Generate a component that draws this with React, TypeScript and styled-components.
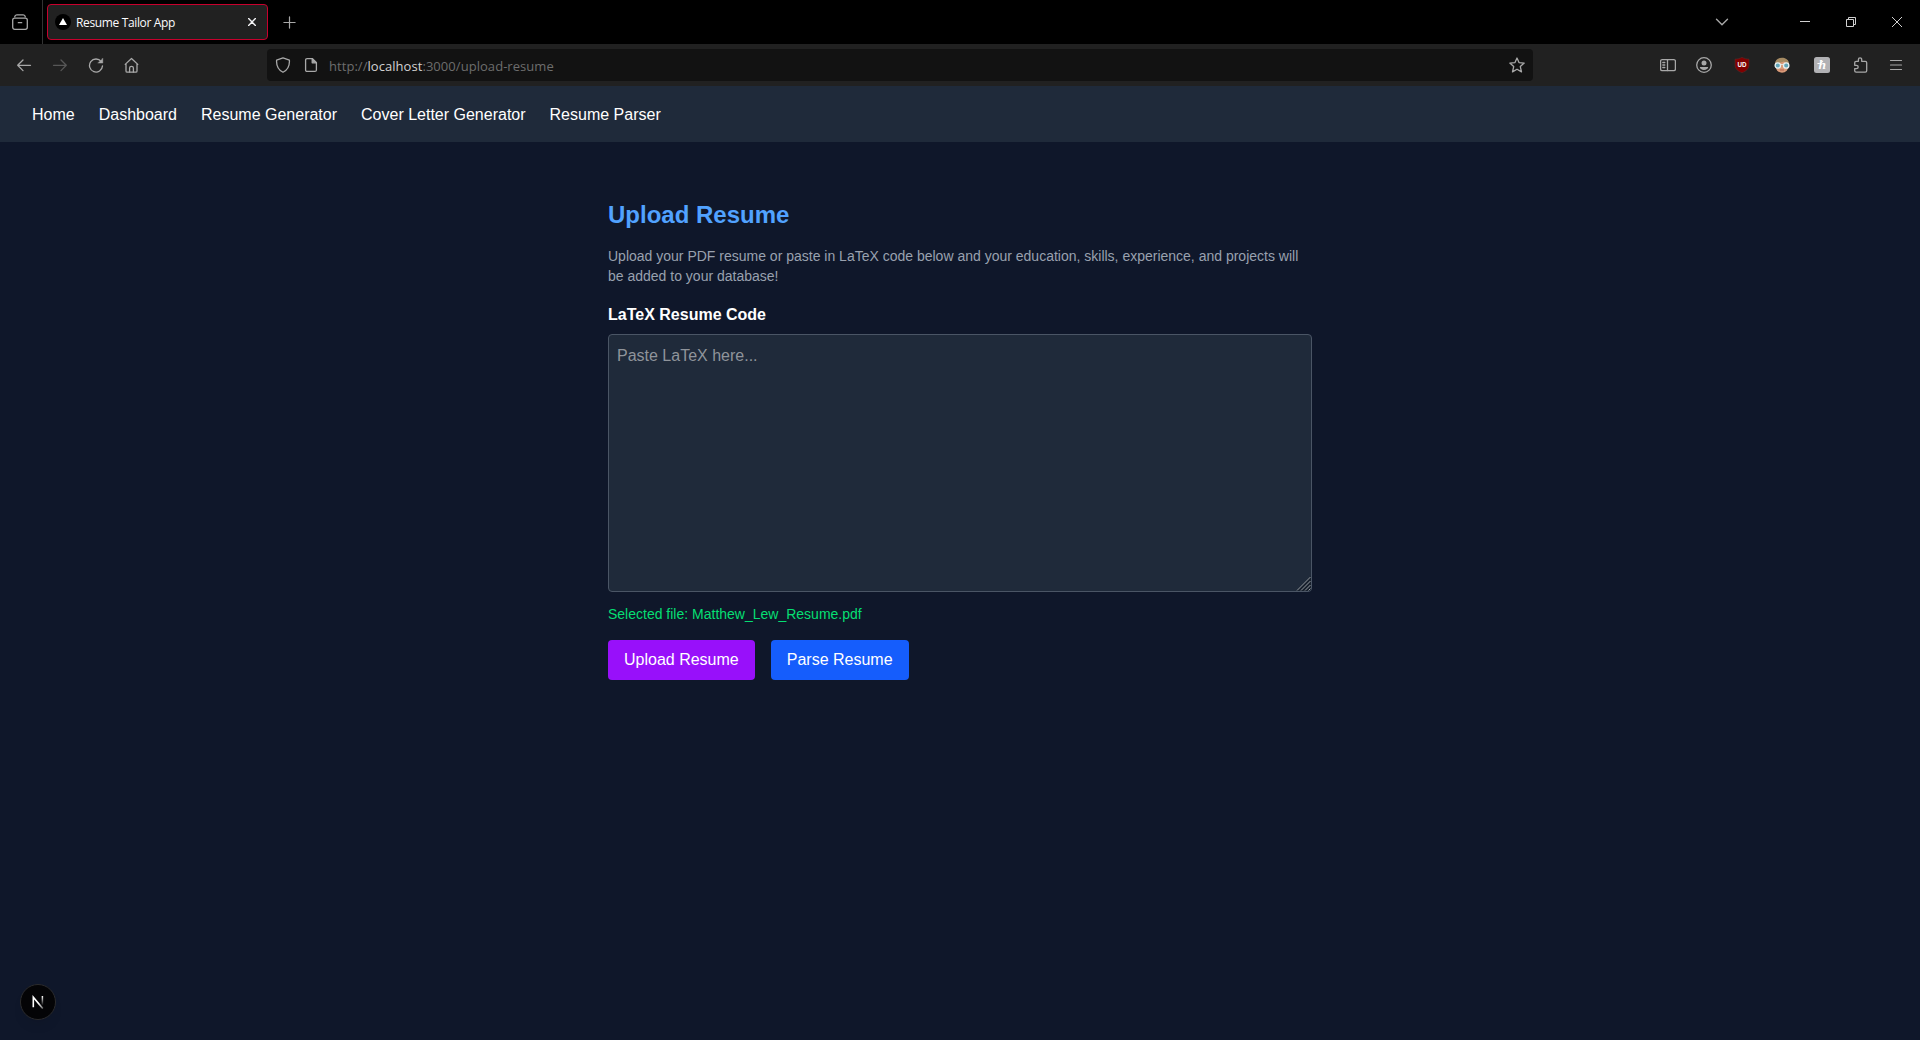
import React from 'react';
import styled, { createGlobalStyle } from 'styled-components';

const GlobalStyle = createGlobalStyle`
  *, *::before, *::after { box-sizing: border-box; }
  body {
    margin: 0;
    background: #0f172a;
    color: #ffffff;
    font-family: "Liberation Sans", Arial, sans-serif;
    font-size: 16px;
    line-height: 24px;
  }
  h1, p { margin: 0; }
`;

const Screen = styled.div`
  display: flex;
  flex-direction: column;
  width: 1920px;
  height: 1040px;
  overflow: hidden;
`;

const uiFont = `"Open Sans", "Noto Sans", sans-serif`;

const TabStrip = styled.header`
  display: flex;
  align-items: center;
  height: 44px;
  background: #000000;
  color: #a8a8a8;
`;

const FirefoxView = styled.div`
  display: flex;
  align-items: center;
  justify-content: center;
  width: 43px;
  height: 44px;
  padding-right: 2px;
  border-right: 1px solid #333333;
`;

const Tab = styled.div`
  display: flex;
  align-items: center;
  width: 221px;
  height: 36px;
  margin-left: 4px;
  padding: 0 11px 0 7px;
  background: #212121;
  border: 1px solid #c8002d;
  border-radius: 4px;
`;

const TabTitle = styled.span`
  flex: 1;
  margin-left: 5px;
  padding-top: 2px;
  color: #fbfbfe;
  font-family: ${uiFont};
  font-size: 12px;
  line-height: 16px;
  letter-spacing: -0.36px;
  white-space: nowrap;
`;

const NewTab = styled.div`
  display: flex;
  margin-left: 13px;
`;

const WindowControls = styled.div`
  display: flex;
  margin-left: auto;
`;

const Control = styled.div<{ $width: number }>`
  display: flex;
  align-items: center;
  justify-content: center;
  width: ${(p) => p.$width}px;
  height: 44px;
`;

const Toolbar = styled.div`
  display: flex;
  align-items: center;
  height: 42px;
  padding: 0 0 0 6px;
  background: #212121;
  color: #a8a8a8;
`;

const ToolButton = styled.div<{ $width?: number; $dim?: boolean }>`
  display: flex;
  flex: none;
  align-items: center;
  justify-content: center;
  width: ${(p) => p.$width ?? 36}px;
  height: 32px;
  color: ${(p) => (p.$dim ? '#575757' : 'inherit')};
`;

const AddressBar = styled.div`
  display: flex;
  flex: none;
  align-items: center;
  width: 1266px;
  height: 32px;
  margin: 0 117px;
  padding: 0 8px;
  border-radius: 4px;
  background: #121212;
`;

const Url = styled.span`
  flex: 1;
  margin-left: 10px;
  padding-top: 2px;
  color: #6d6d6d;
  font-family: ${uiFont};
  font-size: 13px;
  line-height: 20px;
  letter-spacing: 0.05px;
  white-space: nowrap;
`;

const Host = styled.span`
  color: #d2d2d2;
`;

const IconGap = styled.span`
  width: 12px;
`;

const Nav = styled.nav`
  display: flex;
  align-items: center;
  gap: 24px;
  height: 56px;
  padding: 2px 32px 0;
  background: #1f2a3a;
`;

const NavLink = styled.a`
  color: #ffffff;
  white-space: nowrap;
`;

const Main = styled.main`
  width: 768px;
  margin: 0 auto;
  padding: 57px 32px 0;
`;

const Title = styled.h1`
  margin-bottom: 15px;
  color: #51a2ff;
  font-size: 24px;
  font-weight: 700;
  line-height: 32px;
`;

const Intro = styled.p`
  margin-bottom: 17px;
  color: #99a1af;
  font-size: 14px;
  line-height: 20px;
`;

const Label = styled.label`
  display: block;
  margin-bottom: 7px;
  font-weight: 700;
`;

const Field = styled.div`
  position: relative;
  height: 258px;
`;

const CodeInput = styled.textarea`
  display: block;
  width: 100%;
  height: 258px;
  padding: 9px 8px 7px;
  background: #1f2a3a;
  border: 1px solid #4a5565;
  border-radius: 4px;
  color: #ffffff;
  font: inherit;
  resize: none;
  outline: none;
  &::placeholder { color: #8f949b; opacity: 1; }
`;

const Grip = styled.svg`
  position: absolute;
  right: 1px;
  bottom: 1px;
`;

const FileNote = styled.p`
  margin: 12px 0 16px;
  color: #05df72;
  font-size: 14px;
  line-height: 20px;
`;

const Actions = styled.div`
  display: flex;
  gap: 16px;
`;

const Button = styled.button<{ $color: string }>`
  padding: 8px 16px;
  border: 0;
  border-radius: 4px;
  background: ${(p) => p.$color};
  color: #ffffff;
  font: inherit;
`;

const DevBadge = styled.div`
  position: fixed;
  left: 20px;
  bottom: 20px;
  display: flex;
  align-items: center;
  justify-content: center;
  width: 36px;
  height: 36px;
  border: 1px solid #2b2b2d;
  border-radius: 50%;
  background: #040406;
  box-shadow: 0 8px 16px -8px rgba(0, 0, 0, 0.2);
`;

const Glyph = ({ children, size = 16, width = 1.3 }: { children: React.ReactNode; size?: number; width?: number }) => (
  <svg
    width={size}
    height={size}
    viewBox={`0 0 ${size} ${size}`}
    fill="none"
    stroke="currentColor"
    strokeWidth={width}
    strokeLinecap="round"
    strokeLinejoin="round"
  >
    {children}
  </svg>
);

const links = ['Home', 'Dashboard', 'Resume Generator', 'Cover Letter Generator', 'Resume Parser'];

export default function App() {
  return (
    <Screen>
      <GlobalStyle />
      <TabStrip>
        <FirefoxView>
          <Glyph>
            <rect x="0.7" y="4.2" width="14.6" height="11.1" rx="2" />
            <path d="M2.7 2.9C2.9 1.4 3.6.9 4.8.9h6.4c1.200 0 1.900.5 2.100 2M6.300 8.700h3.400" />
          </Glyph>
        </FirefoxView>
        <Tab>
          <svg width="16" height="16" viewBox="0 0 16 16">
            <circle cx="8" cy="8" r="8" fill="#000" />
            <path d="M8 4l4 7H4z" fill="#fff" />
          </svg>
          <TabTitle>Resume Tailor App</TabTitle>
          <svg width="8" height="8" viewBox="0 0 8 8" fill="none" stroke="#f4f4f6" strokeWidth="1.4" strokeLinecap="round">
            <path d="M.6.6l6.800 6.800M7.400.6L.6 7.400" />
          </svg>
        </Tab>
        <NewTab>
          <Glyph size={17} width={1.2}>
            <path d="M8.500 2.900v11.200M2.900 8.500h11.200" />
          </Glyph>
        </NewTab>
        <WindowControls>
          <Control $width={60}>
            <Glyph width={1.4}>
              <path d="M2.500 5.200L8 10.700l5.500-5.500" />
            </Glyph>
          </Control>
          <Control $width={30} />
          <Control $width={46}>
            <svg width="10" height="10" shapeRendering="crispEdges">
              <rect y="4" width="10" height="1" fill="#d0d0d0" />
            </svg>
          </Control>
          <Control $width={46}>
            <svg width="10" height="10" fill="none" stroke="#d0d0d0">
              <path d="M.5 2.500h7v7h-7zM2.500 2.500v-2h7v7h-2" />
            </svg>
          </Control>
          <Control $width={46}>
            <svg width="10" height="10" fill="none" stroke="#d0d0d0">
              <path d="M0 0l10 10M10 0L0 10" />
            </svg>
          </Control>
        </WindowControls>
      </TabStrip>

      <Toolbar>
        <ToolButton>
          <Glyph>
            <path d="M14.500 8.300H1.700M7 3L1.700 8.300 7 13.600" />
          </Glyph>
        </ToolButton>
        <ToolButton $dim>
          <Glyph>
            <path d="M1.500 8.300h12.800M9 3l5.300 5.300L9 13.600" />
          </Glyph>
        </ToolButton>
        <ToolButton>
          <Glyph>
            <path d="M13.200 4.600A6.500 6.500 0 1 0 14.500 8.900" />
            <path d="M14.800 1.400v4.700h-4.700z" fill="currentColor" strokeWidth=".4" />
          </Glyph>
        </ToolButton>
        <ToolButton>
          <Glyph>
            <path d="M1.200 7.400L7.500 1.500 13.800 7.400M2 6.800v7.100c0 .8.4 1.200 1.200 1.200h8.600c.8 0 1.200-.4 1.200-1.200V6.800" />
            <path d="M5.600 15v-4c0-1 .6-1.600 1.900-1.600s1.900.6 1.900 1.600v4" />
          </Glyph>
        </ToolButton>
        <AddressBar>
          <Glyph>
            <path d="M8 .9L14.400 3.200c.4 6-1.500 9.500-6.400 12.100C3.100 12.700 1.200 9.200 1.600 3.200z" />
          </Glyph>
          <IconGap />
          <Glyph>
            <path d="M4.100 1.600h5.300l4 4v7.300c0 1-.5 1.500-1.500 1.500H4.100c-1 0-1.500-.5-1.500-1.500V3.100c0-1 .5-1.500 1.500-1.500z" />
            <path d="M9.200 1.700v4.100h4.100z" fill="currentColor" />
          </Glyph>
          <Url>
            http://<Host>localhost</Host>:3000/upload-resume
          </Url>
          <Glyph>
            <path d="M8 1l2 4.600 5.200.5-3.900 3.500 1.200 5.300L8 12.200l-4.500 2.700 1.200-5.300L.8 6.100 6 5.600z" />
          </Glyph>
        </AddressBar>
        <ToolButton>
          <Glyph>
            <rect x=".6" y="2.600" width="14.800" height="11" rx="1.500" />
            <path d="M7.500 2.600v11M2.800 5.500h2M2.800 8h2M2.800 10.500h2" />
          </Glyph>
        </ToolButton>
        <ToolButton>
          <Glyph>
            <circle cx="8" cy="8" r="7.300" />
            <circle cx="8" cy="6" r="2.500" fill="currentColor" stroke="none" />
            <path d="M3.800 9.900h8.400c0 1.600-1.800 3-4.200 3s-4.200-1.400-4.200-3z" fill="currentColor" stroke="none" />
          </Glyph>
        </ToolButton>
        <ToolButton $width={40}>
          <svg width="16" height="16" viewBox="0 0 16 16">
            <path d="M8 .2C5.800 1.600 3.500 2 1 2.100v5.700c0 4 2.800 6.400 7 8 4.200-1.600 7-4 7-8V2.100C12.500 2 10.200 1.600 8 .2z" fill="#800000" stroke="#573030" strokeWidth=".5" />
            <text x="8" y="10" textAnchor="middle" textLength="9" lengthAdjust="spacingAndGlyphs" fontFamily="Liberation Sans" fontWeight="700" fontSize="7" fill="#fff">UD</text>
          </svg>
        </ToolButton>
        <ToolButton $width={40}>
          <svg width="16" height="16" viewBox="0 0 16 16">
            <ellipse cx="8" cy="8.500" rx="6.700" ry="7.300" fill="#d99a78" />
            <path d="M1 7.500C.8 3.200 3.800.8 8 .8s7.200 2.400 7 6.700L12.500 6 10 4.500 5 6z" fill="#a58a62" />
            <circle cx="3.800" cy="8.500" r="2.700" fill="#62a5b8" stroke="#e8efef" strokeWidth="1.300" />
            <circle cx="12.200" cy="8.500" r="2.700" fill="#62a5b8" stroke="#e8efef" strokeWidth="1.300" />
            <path d="M6.400 8c1-.7 2.200-.7 3.200 0" fill="none" stroke="#e8efef" />
            <path d="M6 13h4" stroke="#b86550" />
          </svg>
        </ToolButton>
        <ToolButton $width={40}>
          <svg width="16" height="16" viewBox="0 0 16 16">
            <rect width="16" height="16" rx="2.500" fill="#b1b1b4" />
            <text x="8.200" y="12.400" textAnchor="middle" fontFamily="Liberation Serif" fontStyle="italic" fontWeight="700" fontSize="13.500" fill="#fff">h</text>
            <path d="M3.800 6.600c2.200.2 4-.6 5-2.200" fill="none" stroke="#fff" strokeWidth="1" strokeLinecap="round" />
          </svg>
        </ToolButton>
        <ToolButton $width={38}>
          <Glyph>
            <path d="M1.700 5.700c0-1 .4-1.400 1.400-1.400h2.300V2.600C5.400.2 8.700.2 8.700 2.600v1.700h3.600c1 0 1.400.4 1.400 1.400v8.100c0 1-.4 1.400-1.400 1.400H3.100c-1 0-1.400-.4-1.400-1.400v-2.200h1.700c2.400 0 2.400-3.300 0-3.300H1.700z" />
          </Glyph>
        </ToolButton>
        <ToolButton $width={32}>
          <Glyph width={1.2}>
            <path d="M2.500 3.500h11M2.500 8h11M2.500 12.500h11" />
          </Glyph>
        </ToolButton>
      </Toolbar>

      <Nav>
        {links.map((l) => (
          <NavLink key={l}>{l}</NavLink>
        ))}
      </Nav>

      <Main>
        <Title>Upload Resume</Title>
        <Intro>
          Upload your PDF resume or paste in LaTeX code below and your education, skills, experience, and projects will
          be added to your database!
        </Intro>
        <Label htmlFor="latex">LaTeX Resume Code</Label>
        <Field>
          <CodeInput id="latex" placeholder="Paste LaTeX here..." />
          <Grip width="15" height="15" viewBox="0 0 15 15">
            <path d="M0 15L15 0v12a3 3 0 0 1-3 3z" fill="#17202d" />
            <path d="M1 14.500L14.500 1M5 14.500L14.500 5M9 14.500L14.500 9M12.500 14.500l2-2" stroke="#a5a9ae" strokeWidth=".9" />
          </Grip>
        </Field>
        <FileNote>Selected file: Matthew_Lew_Resume.pdf</FileNote>
        <Actions>
          <Button $color="#9810fa">Upload Resume</Button>
          <Button $color="#155dfc">Parse Resume</Button>
        </Actions>
      </Main>

      <DevBadge>
        <svg width="12" height="14" viewBox="0 0 12 14" fill="none">
          <defs>
            <linearGradient id="stem" x1="0" y1="1" x2="0" y2="10.500" gradientUnits="userSpaceOnUse">
              <stop stopColor="#fff" />
              <stop offset="1" stopColor="#fff" stopOpacity="0" />
            </linearGradient>
            <linearGradient id="diagonal" x1="7" y1="8" x2="12" y2="15" gradientUnits="userSpaceOnUse">
              <stop stopColor="#fff" />
              <stop offset="1" stopColor="#fff" stopOpacity=".2" />
            </linearGradient>
          </defs>
          <path d="M10.400 1v9" stroke="url(#stem)" strokeWidth="1.500" />
          <path d="M1.300 12.200V2.200L10.800 13.600" stroke="url(#diagonal)" strokeWidth="1.600" />
        </svg>
      </DevBadge>
    </Screen>
  );
}
